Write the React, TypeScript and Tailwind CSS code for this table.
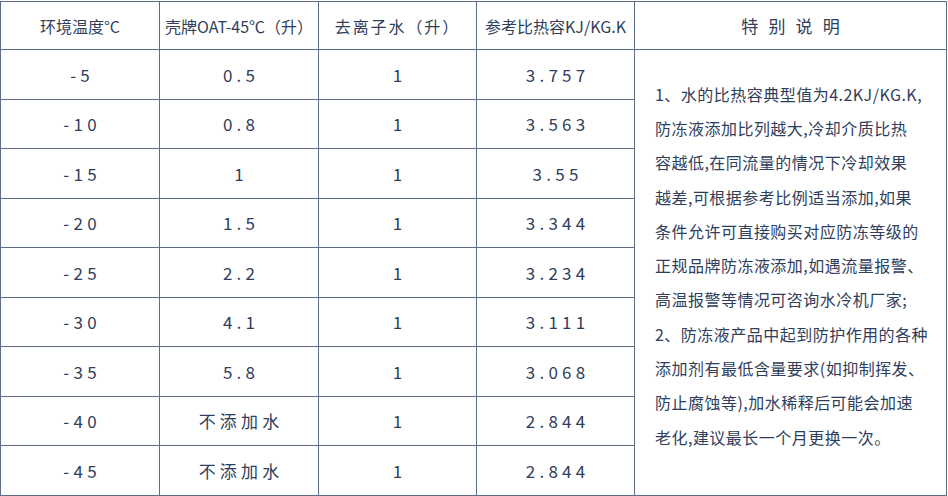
const ROWS = [
  { temp: '-5', oat: '0.5', water: '1', heat: '3.757' },
  { temp: '-10', oat: '0.8', water: '1', heat: '3.563' },
  { temp: '-15', oat: '1', water: '1', heat: '3.55' },
  { temp: '-20', oat: '1.5', water: '1', heat: '3.344' },
  { temp: '-25', oat: '2.2', water: '1', heat: '3.234' },
  { temp: '-30', oat: '4.1', water: '1', heat: '3.111' },
  { temp: '-35', oat: '5.8', water: '1', heat: '3.068' },
  { temp: '-40', oat: '不添加水', water: '1', heat: '2.844' },
  { temp: '-45', oat: '不添加水', water: '1', heat: '2.844' },
];

// line breaks follow the original layout
const NOTE_LINES = [
  '1、水的比热容典型值为4.2KJ/KG.K,',
  '防冻液添加比列越大,冷却介质比热',
  '容越低,在同流量的情况下冷却效果',
  '越差,可根据参考比例适当添加,如果',
  '条件允许可直接购买对应防冻等级的',
  '正规品牌防冻液添加,如遇流量报警、',
  '高温报警等情况可咨询水冷机厂家;',
  '2、防冻液产品中起到防护作用的各种',
  '添加剂有最低含量要求(如抑制挥发、',
  '防止腐蚀等),加水稀释后可能会加速',
  '老化,建议最长一个月更换一次。',
];

const cell = 'border border-[#5d6c84] text-center align-middle';
const head = `${cell} h-[48px] text-[16px] font-normal`;
const data = `${cell} h-[49.5px] text-[17px] tracking-[0.25em] pl-[0.25em]`;

export default function App() {
  return (
    <div
      className="w-[948px] h-[496px] bg-white pt-px text-[#2f3e5c]"
      style={{ fontFamily: '"Noto Sans CJK SC", "Noto Sans", sans-serif' }}
    >
      <table className="w-[946px] border-collapse table-fixed">
        <colgroup>
          <col className="w-[159px]" />
          <col className="w-[159px]" />
          <col className="w-[158px]" />
          <col className="w-[158px]" />
          <col className="w-[312px]" />
        </colgroup>
        <thead>
          <tr>
            <th className={head}>环境温度°C</th>
            <th className={head}>壳牌OAT-45℃（升）</th>
            <th className={`${head} tracking-[0.12em]`}>去离子水（升）</th>
            <th className={`${head} text-[15px]`}>参考比热容KJ/KG.K</th>
            <th className={`${head} text-[17px] tracking-[0.6em] pl-[0.6em]`}>特别说明</th>
          </tr>
        </thead>
        <tbody>
          {ROWS.map((r, i) => (
            <tr key={r.temp}>
              <td className={data}>{r.temp}</td>
              <td className={data}>{r.oat}</td>
              <td className={data}>{r.water}</td>
              <td className={data}>{r.heat}</td>
              {i === 0 && (
                <td rowSpan={ROWS.length} className={`${cell} text-left pl-[20px] pr-2 pb-[14px]`}>
                  <div className="text-[16px] leading-[34.3px] tracking-[0.03em] whitespace-nowrap">
                    {NOTE_LINES.map((line) => (
                      <div key={line}>{line}</div>
                    ))}
                  </div>
                </td>
              )}
            </tr>
          ))}
        </tbody>
      </table>
    </div>
  );
}
